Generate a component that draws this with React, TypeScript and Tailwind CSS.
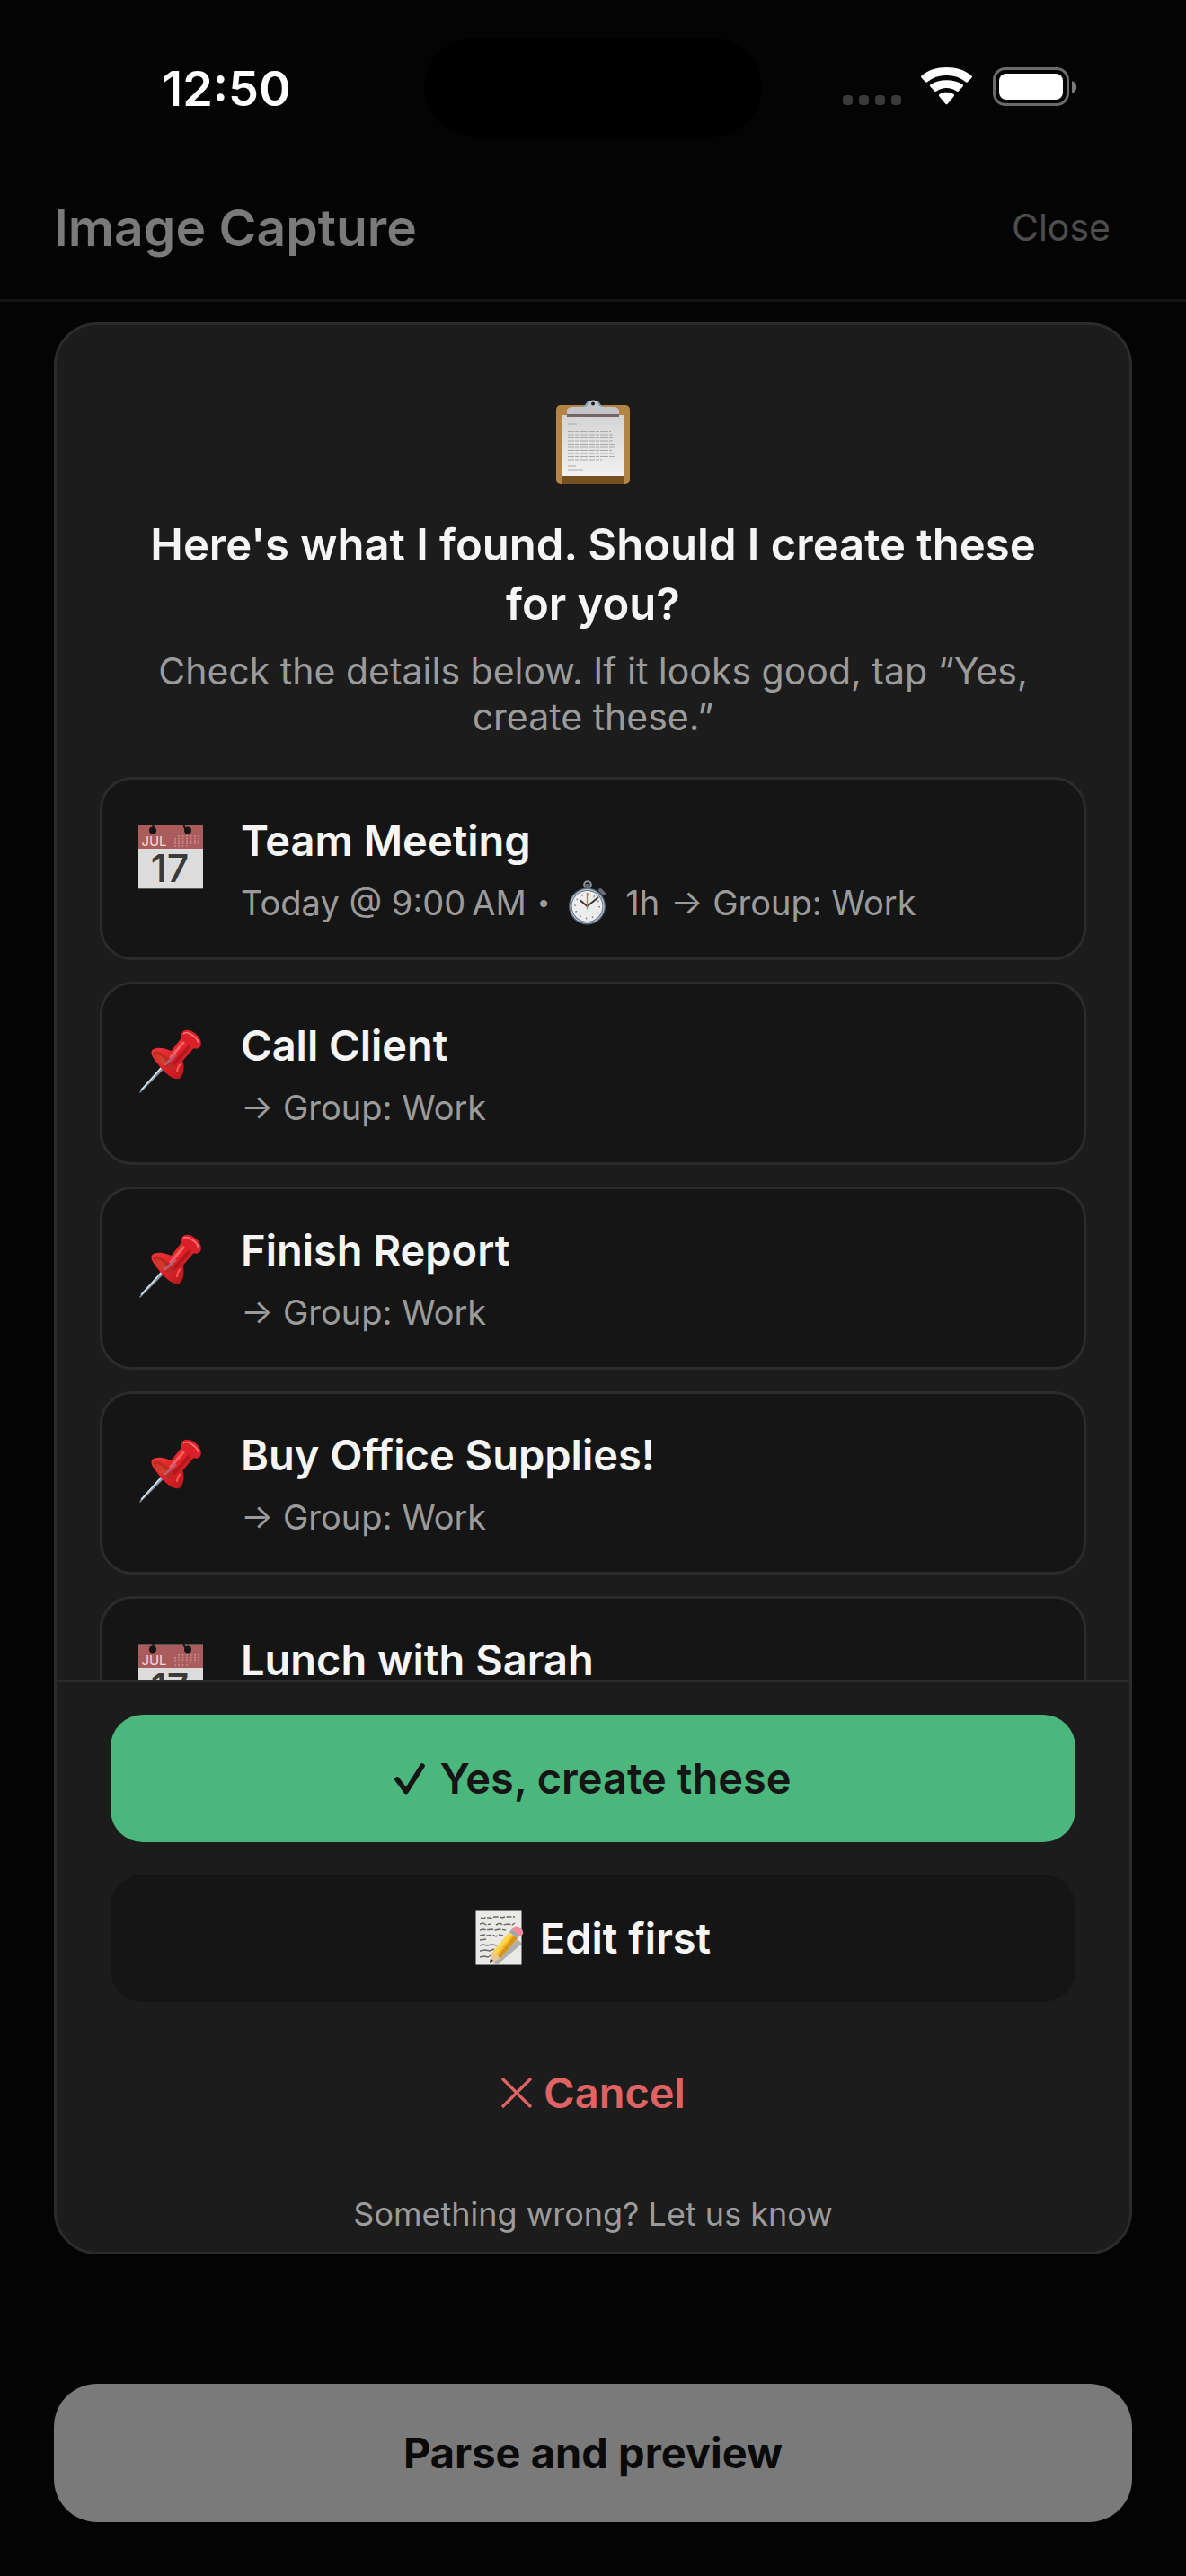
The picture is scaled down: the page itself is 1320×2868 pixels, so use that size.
type Item = {
  title: string;
  kind: "event" | "task";
  when?: string;
  duration?: string;
  group?: string;
};

const items: Item[] = [
  {
    title: "Team Meeting",
    kind: "event",
    when: "Today @ 9:00\u202fAM",
    duration: "1h",
    group: "Work",
  },
  { title: "Call Client", kind: "task", group: "Work" },
  { title: "Finish Report", kind: "task", group: "Work" },
  { title: "Buy Office Supplies!", kind: "task", group: "Work" },
  { title: "Lunch with Sarah", kind: "event" },
];

export default function App() {
  return (
    <div className="flex h-dvh flex-col bg-[#040404] font-['Inter',sans-serif] text-[#f5f5f5]">
      <StatusBar />
      <header className="flex h-[150px] shrink-0 items-center justify-between border-b-3 border-[#141414] pr-[84px] pb-3 pl-[60px]">
        <h1 className="text-[57px] font-semibold text-[#7a7a7a]">
          Image Capture
        </h1>
        <button className="text-[41px] text-[#4d4d4d]">Close</button>
      </header>
      <main className="flex min-h-0 flex-1 flex-col px-[60px] pt-[23px] pb-[60px]">
        <ConfirmCard />
        <button className="mt-36 h-[154px] shrink-0 rounded-[48px] bg-[#7a7a7a] text-[47px] font-bold text-[#0a0a0a]">
          Parse and preview
        </button>
      </main>
    </div>
  );
}

function StatusBar() {
  return (
    <div className="grid h-[186px] shrink-0 grid-cols-[1fr_376px_1fr] pt-[42px]">
      <div className="flex h-[112px] items-center justify-center pl-8 text-[54px] font-semibold text-white">
        12:50
      </div>
      <div className="h-[110px] rounded-full bg-black" />
      <div className="flex h-[110px] items-center justify-end pr-[121px]">
        <StatusIcons />
      </div>
    </div>
  );
}

function ConfirmCard() {
  return (
    <section className="flex min-h-0 flex-1 flex-col overflow-hidden rounded-[48px] border-3 border-[#2b2b2b] bg-[#1c1c1c]">
      <div className="min-h-0 flex-1 overflow-y-auto px-12 pt-[82px] [scrollbar-width:none]">
        <ClipboardIcon />
        <h2 className="mt-[34px] px-8 text-center text-[49px] leading-[66px] font-semibold">
          Here's what I found. Should I create these for you?
        </h2>
        <p className="mt-4 px-12 text-center text-[41px] leading-[51px] text-[#9b9b9b]">
          Check the details below. If it looks good, tap “Yes, create these.”
        </p>
        <ul className="mt-[41px] flex flex-col gap-6 pb-6">
          {items.map((item) => (
            <ItemCard key={item.title} item={item} />
          ))}
        </ul>
      </div>
      <div className="flex shrink-0 flex-col border-t-3 border-[#2b2b2b] px-[60px] pt-9 pb-[19px]">
        <button className="flex h-[142px] items-center justify-center gap-4 rounded-[36px] bg-[#4bb77d] text-[47px] font-semibold text-[#151515]">
          <CheckIcon />
          Yes, create these
        </button>
        <button className="mt-9 flex h-[142px] items-center justify-center gap-4 rounded-[36px] bg-[#151515] text-[47px] font-semibold">
          <MemoIcon />
          Edit first
        </button>
        <button className="mt-9 flex h-[130px] items-center justify-center gap-3 text-[47px] font-semibold text-[#e06363]">
          <CrossIcon />
          Cancel
        </button>
        <a
          href="#feedback"
          className="mt-12 text-center text-[36px] leading-[45px] text-[#9b9b9b]"
        >
          Something wrong? Let us know
        </a>
      </div>
    </section>
  );
}

function ItemCard({ item }: { item: Item }) {
  return (
    <li className="flex gap-10 rounded-[36px] border-3 border-[#2b2b2b] bg-[#151515] px-[38px] pt-[38px] pb-[34px]">
      {item.kind === "event" ? <CalendarIcon /> : <PinIcon />}
      <div>
        <h3 className="text-[47px] leading-[60px] font-semibold">
          {item.title}
        </h3>
        <p className="mt-3 flex h-[54px] items-center gap-3 text-[38px] leading-[54px] text-[#9b9b9b]">
          {item.when && (
            <>
              <span>{item.when}</span>
              <span className="text-[26px]">•</span>
              <StopwatchIcon />
              <span>{item.duration}</span>
            </>
          )}
          {item.group && <span>→ Group: {item.group}</span>}
        </p>
      </div>
    </li>
  );
}

function StatusIcons() {
  return (
    <svg width="262" height="44" viewBox="0 0 262 44" aria-hidden="true">
      <g fill="#3a3a3a">
        <rect x="1" y="31" width="11" height="11" rx="4" />
        <rect x="19" y="31" width="11" height="11" rx="4" />
        <rect x="37" y="31" width="11" height="11" rx="4" />
        <rect x="55" y="31" width="11" height="11" rx="4" />
      </g>
      <g fill="#fff">
        <path d="M88.4 11.6a1.6 1.6 0 0 1 .1-2.2C96 3 106 0 116.500 0s20.500 3 28 9.400a1.600 1.600 0 0 1 .1 2.200l-4.500 4.500a1.600 1.600 0 0 1-2.200.1A33 33 0 0 0 116.500 9a33 33 0 0 0-21.400 7.200 1.600 1.600 0 0 1-2.200-.1z" />
        <path d="M98.400 21.600a1.600 1.600 0 0 1 .1-2.300c5-3.200 11-5 18-5s13 1.800 18 5a1.600 1.600 0 0 1 .1 2.300l-4.900 4.900a1.600 1.600 0 0 1-2.200.1c-3-2.200-6.500-3.600-11-3.600s-8 1.400-11 3.600a1.600 1.600 0 0 1-2.200-.1z" />
        <path d="M108.300 32.300a1.600 1.600 0 0 1 .2-2.300c2.200-1.600 5-2.200 8-2.200s5.800.6 8 2.200a1.600 1.600 0 0 1 .2 2.300l-7.300 8.600a1.300 1.300 0 0 1-1.800 0z" />
      </g>
      <rect
        x="169.500"
        y="1.500"
        width="82"
        height="40"
        rx="12.500"
        fill="none"
        stroke="#6b6b6b"
        strokeWidth="3"
      />
      <rect x="175" y="7" width="71" height="29" rx="8" fill="#fff" />
      <path d="M256 15c7 2.500 7 11.500 0 14z" fill="#7a7a7a" />
    </svg>
  );
}

function ClipboardIcon() {
  const lines = [36.5, 40, 43.500, 47, 50.500, 54, 57.500, 61, 64.500, 68];
  return (
    <svg
      className="mx-auto"
      width="84"
      height="96"
      viewBox="0 0 84 96"
      aria-hidden="true"
    >
      <defs>
        <linearGradient id="sheet" x1="0" y1="0" x2="0" y2="1">
          <stop offset="0" stopColor="#d4d4d4" />
          <stop offset="1" stopColor="#f1f1f1" />
        </linearGradient>
      </defs>
      <rect x="1" y="7" width="82" height="88" rx="5" fill="#b38443" />
      <rect x="7" y="86" width="69" height="9" fill="#76501f" />
      <rect x="7" y="18" width="70" height="68" fill="url(#sheet)" />
      <g stroke="#a9a9a9" strokeWidth="1.200">
        <path d="M14 28h10M14 75h9M14 79h17" />
        {lines.map((y, i) => (
          <path
            key={y}
            d={`M14 ${y}h${[48, 50, 50, 50, 52, 54, 49, 51, 52, 38][i]}`}
            strokeDasharray="7 1 4 1 9 1"
          />
        ))}
      </g>
      <path d="M28 9c5 0 6-4 8-6h12c2 2 3 6 8 6z" fill="#7f9cc0" />
      <rect x="13" y="16" width="58" height="4" fill="#75665f" />
      <path
        d="M13 17v-3c0-4 3-5 7-5h10c5 0 6-2 6.500-4a6 6 0 0 1 11 0c.5 2 2 4 6.500 4h10c4 0 7 1 7 5v3z"
        fill="#c3c5c9"
      />
      <circle cx="42" cy="5.500" r="2" fill="#1c1c1c" />
    </svg>
  );
}

function CalendarIcon() {
  return (
    <svg
      className="mt-[10px] shrink-0"
      width="76"
      height="76"
      viewBox="0 0 76 76"
      aria-hidden="true"
    >
      <rect x="2" y="2" width="72" height="72" fill="#dcdcdc" />
      <rect x="2" y="2" width="72" height="27" fill="#aa5c5c" />
      <path d="M2 2.500h72M2 73.500h72" stroke="#555" strokeWidth="1" />
      <circle cx="18" cy="8.500" r="4" fill="#151515" />
      <circle cx="57" cy="8.500" r="4" fill="#151515" />
      <path
        d="M18.500 1v7M52.500 1c0 4 1 5 4 7"
        stroke="#151515"
        strokeWidth="2"
        fill="none"
      />
      <g stroke="#c98f8f" strokeWidth="1.800" strokeDasharray="1.500 1.300">
        <path d="M43 17v10M47 14v13M51.500 14v13M56 14v13M60.500 14v10M65 14v10M69 14v10" />
      </g>
      <text
        x="19.500"
        y="25.500"
        textAnchor="middle"
        fontFamily="Inter, sans-serif"
        fontSize="15"
        fill="#f0dede"
      >
        JUL
      </text>
      <text
        x="37"
        y="66"
        textAnchor="middle"
        fontFamily="Inter, sans-serif"
        fontSize="43"
        fontWeight="500"
        fill="#3a3a3a"
      >
        17
      </text>
    </svg>
  );
}

function PinIcon() {
  return (
    <svg
      className="mt-[10px] shrink-0"
      width="76"
      height="76"
      viewBox="0 0 76 76"
      aria-hidden="true"
    >
      <defs>
        <linearGradient id="pinBody" x1="0" y1="0" x2="1" y2="1">
          <stop offset="0" stopColor="#f04040" />
          <stop offset="0.500" stopColor="#e02228" />
          <stop offset="1" stopColor="#a5151b" />
        </linearGradient>
      </defs>
      <path d="M3 72L31 39l4 3L4 73z" fill="#7d93a5" />
      <path d="M5 69.500L32 40" stroke="#d5e8f5" strokeWidth="1.600" />
      <path d="M4 73L34 43" stroke="#4c3a36" strokeWidth="1" />
      <path
        d="M17.500 25c5-4 14-2 21 1l12-15 14 11-13 15c2 7 1 17-4 20-6 2-15-5-22-14s-11-14-8-18z"
        fill="url(#pinBody)"
      />
      <path
        d="M19 27c4-2 12 2 18 9 4 4 5 8 3 10-7-1-13-6-17-11s-6-7-4-8z"
        fill="#b92a20"
      />
      <path d="M22 30c4 0 9 4 12 9l-5 4c-5-5-8-9-7-13z" fill="#d23b2c" />
      <path
        d="M50 7c2-6 10-5 16 0s8 13 3 16c-4 2-10-1-14-5s-6-8-5-11z"
        fill="#d91f27"
      />
      <path
        d="M52 7c4-4 15 3 17 10"
        stroke="#ff6c6c"
        strokeWidth="1.800"
        fill="none"
      />
      <path
        d="M52 17L38 33"
        stroke="#f76161"
        strokeWidth="3"
        strokeLinecap="round"
      />
      <path
        d="M58 22L42 40"
        stroke="#b4171e"
        strokeWidth="4"
        strokeLinecap="round"
      />
      <path
        d="M32 41l11-10"
        stroke="#b95a78"
        strokeWidth="3"
        strokeLinecap="round"
      />
      <path
        d="M45 50c0-4 2-8 4-9"
        stroke="#f25a5a"
        strokeWidth="2"
        fill="none"
      />
    </svg>
  );
}

function StopwatchIcon() {
  return (
    <svg
      className="mx-2 shrink-0"
      width="44"
      height="50"
      viewBox="0 0 44 50"
      aria-hidden="true"
    >
      <circle
        cx="22"
        cy="5"
        r="3.800"
        fill="none"
        stroke="#8b939b"
        strokeWidth="2"
      />
      <rect x="19.500" y="4" width="5" height="6" fill="#626a72" />
      <path
        d="M36 11l4 4"
        stroke="#646b74"
        strokeWidth="4"
        strokeLinecap="round"
      />
      <circle cx="21.500" cy="29" r="20.500" fill="#56616d" />
      <circle
        cx="21.500"
        cy="29"
        r="18.500"
        fill="none"
        stroke="#a9bfd6"
        strokeWidth="1.500"
      />
      <circle cx="21.500" cy="29" r="17" fill="#ededed" />
      <circle
        cx="21.500"
        cy="29"
        r="13.500"
        fill="none"
        stroke="#8c8c8c"
        strokeWidth="2"
        strokeDasharray="1.500 5.570"
      />
      <path
        d="M21.500 29L14 22.500M21.500 29l12.500-10"
        stroke="#333"
        strokeWidth="1.800"
      />
      <path d="M21.500 32V14" stroke="#e4674f" strokeWidth="1.300" />
    </svg>
  );
}

function MemoIcon() {
  return (
    <svg width="56" height="62" viewBox="0 0 56 62" aria-hidden="true">
      <rect x="0.500" y="0.500" width="51" height="60" fill="#e9e9e7" />
      <g stroke="#6a6a6a" strokeWidth="1.400" fill="none">
        <path
          d="M6 8l3 1 2-1h5l2 1 3-2h6l3 1 3-1h11"
          strokeDasharray="6 1.500"
        />
        <path
          d="M5 15l4-1 3 2 5-1M23 16l4-2 4 2 6-1 4 1 3-2"
          strokeDasharray="8 1.500"
        />
        <path d="M5 22l4-1 3 1 6-1 4 1 5-1 7 1" strokeDasharray="7 1.500" />
        <path d="M5 28l5-1 4 1 5-1 4 2 3-2 5 1" strokeDasharray="6 1.500" />
        <path d="M5 33l7-1M5 39l4-1 4 1 6-1 5 1M5 45l6-1 5 1 5-2M5 52l5-1 4 1 3-2" />
      </g>
      <path d="M19 59l28-27 5 5-27 23z" fill="#000" opacity="0.250" />
      <path d="M16 58l3-11L38 24l9 7-20 23z" fill="#f7bd26" />
      <path d="M19.500 46.500L38 24l3.500 2.500-19 23z" fill="#ffd650" />
      <path d="M24 52l19-24 4 3-20 23z" fill="#d9951b" />
      <path d="M16 58l3-11c4 0 7 3 8 7z" fill="#e9c796" />
      <path d="M16 58l1-4.500 3 2.500z" fill="#292929" />
      <path d="M38 24l2.500-3 9 7-2.500 3z" fill="#98a5b4" />
      <path d="M40.500 21c2-3 5-5 9-2s5 6 2 9l-2 1z" fill="#ee8d97" />
    </svg>
  );
}

function CheckIcon() {
  return (
    <svg width="34" height="35" viewBox="0 0 34 35" aria-hidden="true">
      <path
        d="M3 18L13 31.500 31 3"
        fill="none"
        stroke="currentColor"
        strokeWidth="5.600"
        strokeLinecap="round"
        strokeLinejoin="round"
      />
    </svg>
  );
}

function CrossIcon() {
  return (
    <svg width="36" height="34" viewBox="0 0 36 34" aria-hidden="true">
      <path
        d="M2 1l32 32M34 1L2 33"
        stroke="currentColor"
        strokeWidth="3.400"
      />
    </svg>
  );
}
